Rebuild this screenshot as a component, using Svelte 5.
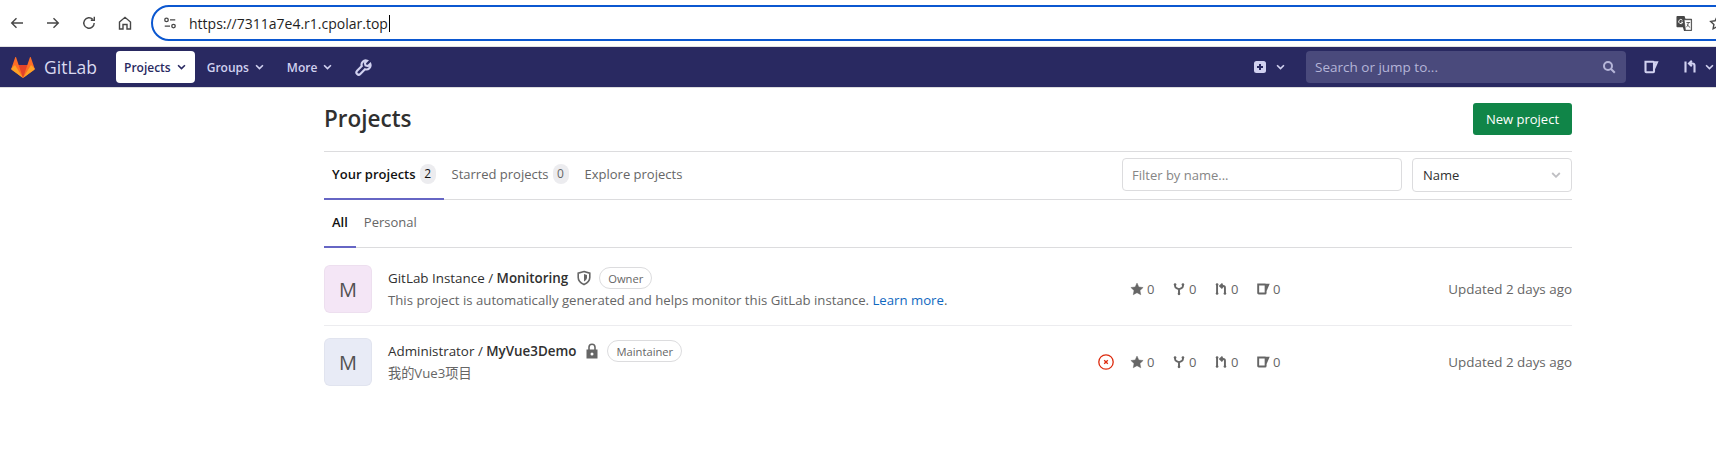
<script lang="ts">
  const stats = [
    { icon: 'star', n: 0 },
    { icon: 'fork', n: 0 },
    { icon: 'mr', n: 0 },
    { icon: 'issue', n: 0 },
  ];

  const paths: Record<string, string> = {
    star: 'M8 1.200l2.100 4.500 4.900.6-3.600 3.400.9 4.900L8 12.200l-4.300 2.400.9-4.900L1 6.300l4.900-.6z',
    fork: 'M3.500 2.500v2c0 1.500 1 2.300 2.200 2.800L8 8.300l2.300-1c1.200-.5 2.200-1.300 2.200-2.800v-2M8 8.300v5.200',
    mr: 'M3.500 2.500v11M12.500 13.500V6.500c0-1.300-.7-2-2-2H7.500M9.800 1.800L7 4.500l2.800 2.700',
    issue: 'M2.500 2.800h7.800c.4 0 .7.3.7.7v9c0 .4-.3.7-.7.7H3.200c-.4 0-.7-.3-.7-.7zM11 3.200h3l-3 6.800',
  };

  const projects = [
    {
      ns: 'GitLab Instance',
      name: 'Monitoring',
      role: 'Owner',
      tint: 'pink',
      vis: 'shield',
      desc: 'This project is automatically generated and helps monitor this GitLab instance.',
      link: 'Learn more',
      failed: false,
    },
    {
      ns: 'Administrator',
      name: 'MyVue3Demo',
      role: 'Maintainer',
      tint: 'blue',
      vis: 'lock',
      desc: '我的Vue3项目',
      link: '',
      failed: true,
    },
  ];
</script>

<div class="browser">
  <div class="tools">
    <svg class="tool" viewBox="0 0 16 16"><path d="M14 8H3M7.500 3.200L2.700 8l4.800 4.800" /></svg>
    <svg class="tool" viewBox="0 0 16 16"><path d="M2 8h11M8.500 3.200L13.300 8l-4.800 4.800" /></svg>
    <svg class="tool" viewBox="0 0 16 16"><path d="M13.200 8a5.200 5.200 0 1 1-1.500-3.700M13.300 1.800v3.500H9.800" /></svg>
    <svg class="tool" viewBox="0 0 16 16"><path d="M2.500 7L8 2.300 13.500 7v7H10V9.500H6V14H2.500z" /></svg>
  </div>
  <div class="omnibox">
    <svg class="tune" viewBox="0 0 16 16">
      <circle cx="4" cy="4.500" r="2" /><path d="M8 4.500h6M2 11.500h6" /><circle cx="12" cy="11.500" r="2" />
    </svg>
    <span class="url">https://7311a7e4.r1.cpolar.top</span><span class="caret"></span>
    <svg class="translate" viewBox="0 0 18 18">
      <path class="t-back" d="M1.500 1h7.500l1 3h6c.5 0 1 .4 1 1v11c0 .5-.5 1-1 1H8.500l-1.200-4H1.500c-.5 0-1-.4-1-1V2c0-.5.500-1 1-1z" />
      <path class="t-front" d="M8.500 5H16.200v11.200H10z" />
      <path class="t-mark" d="M11 8h4M13 8c0 2-1 4-2.200 5M12 10c.500 1.300 1.500 2.500 3 3.200" />
      <path class="t-g" d="M6.800 5.600a2.200 2.200 0 1 0 .4 2H5.200" />
    </svg>
    <svg class="bookmark" viewBox="0 0 16 16"><path d="M8 1.800l1.900 4 4.400.6-3.200 3 .8 4.400L8 11.700l-3.900 2.100.8-4.400-3.200-3 4.400-.6z" /></svg>
  </div>
</div>

<nav class="topbar">
  <div class="brand">
    <svg class="logo" viewBox="0 0 26 24">
      <path fill="#fc6d26" d="M13 23.500L.8 14.500c-.4-.3-.6-.8-.4-1.300L4.600 1c.1-.4.7-.4.900 0L8.300 9.200h9.400L20.500 1c.2-.4.800-.4.900 0l4.200 12.200c.2.500 0 1-.4 1.300z" />
      <path fill="#e24329" d="M13 23.500L8.300 9.200h9.400z" />
      <path fill="#fca326" d="M.4 13.200c-.2.500 0 1 .4 1.300L13 23.500 4.300 9.200z" />
      <path fill="#fca326" d="M25.600 13.200c.2.500 0 1-.4 1.300L13 23.500l8.700-14.300z" />
    </svg>
    <span class="wordmark">GitLab</span>
  </div>
  <a class="nav-item active" href="#p">Projects <svg class="chev" viewBox="0 0 10 6"><path d="M1.200 1L5 4.800 8.800 1" /></svg></a>
  <a class="nav-item" href="#g">Groups <svg class="chev" viewBox="0 0 10 6"><path d="M1.200 1L5 4.800 8.800 1" /></svg></a>
  <a class="nav-item" href="#m">More <svg class="chev" viewBox="0 0 10 6"><path d="M1.200 1L5 4.800 8.800 1" /></svg></a>
  <svg class="wrench" viewBox="0 0 16 16"><path d="M14.400 4.600l-2.200 2.100-2.300-.6-.6-2.300 2.100-2.200a3.900 3.900 0 0 0-5 5L2 11.100a2.100 2.100 0 0 0 3 3l4.400-4.500a3.900 3.900 0 0 0 5-5z" /></svg>

  <div class="nav-right">
    <div class="plus">
      <svg class="plus-icon" viewBox="0 0 12 12"><rect width="12" height="12" rx="2.500" /><path d="M6 3v6M3 6h6" /></svg>
      <svg class="chev light" viewBox="0 0 10 6"><path d="M1.200 1L5 4.800 8.800 1" /></svg>
    </div>
    <div class="search">
      <span>Search or jump to...</span>
      <svg viewBox="0 0 14 14"><circle cx="6" cy="6" r="4" /><path d="M9 9l3.800 3.800" /></svg>
    </div>
    <svg class="nav-icon" viewBox="0 0 16 16"><path d={paths.issue} /></svg>
    <div class="nav-mr">
      <svg class="nav-icon" viewBox="0 0 16 16"><path d={paths.mr} /></svg>
      <svg class="chev light" viewBox="0 0 10 6"><path d="M1.200 1L5 4.800 8.800 1" /></svg>
    </div>
  </div>
</nav>

<main>
  <header class="title-row">
    <h1>Projects</h1>
    <button class="new">New project</button>
  </header>

  <div class="tabs-row">
    <ul class="tabs">
      <li class="on">Your projects <span class="count">2</span></li>
      <li>Starred projects <span class="count muted">0</span></li>
      <li>Explore projects</li>
    </ul>
    <div class="filters">
      <div class="filter">Filter by name...</div>
      <div class="sort">
        <span>Name</span>
        <svg viewBox="0 0 10 6"><path d="M1.200 1L5 4.800 8.800 1" /></svg>
      </div>
    </div>
  </div>

  <ul class="tabs sub">
    <li class="on">All</li>
    <li>Personal</li>
  </ul>

  <div class="list">
    {#each projects as p (p.name)}
      <section class="project">
        <div class="avatar {p.tint}">M</div>
        <div class="info">
          <div class="name-line">
            <span class="path">{p.ns} / <b>{p.name}</b></span>
            {#if p.vis === 'shield'}
              <svg class="vis" viewBox="0 0 16 16"><path class="outline" d="M8 1.500l5.800 1.700v4.300c0 3.200-2.500 5.500-5.800 7-3.300-1.500-5.800-3.800-5.800-7V3.200z" /><path class="fill" d="M8 4l3 1v2.700c0 1.500-1.300 2.800-3 3.800z" /></svg>
            {:else}
              <svg class="vis" viewBox="0 0 16 16"><path class="outline" d="M5 7V4.300a3 3 0 0 1 6 0V7" /><path class="fill" fill-rule="evenodd" d="M2.500 6.500h11V15.500h-11zM8 9.500a1.500 1.500 0 1 0 0 3 1.500 1.500 0 0 0 0-3z" /></svg>
            {/if}
            <span class="role">{p.role}</span>
          </div>
          <p class="desc">{p.desc}{#if p.link}{' '}<a href="#l">{p.link}</a>.{/if}</p>
        </div>
        <div class="stats">
          {#if p.failed}
            <svg class="failed" viewBox="0 0 16 16"><circle cx="8" cy="8" r="7.200" /><path d="M6.200 6.200l3.600 3.600M9.800 6.200l-3.600 3.600" /></svg>
          {/if}
          {#each stats as s (s.icon)}
            <span class="stat">
              <svg class={s.icon} viewBox="0 0 16 16">
                <path d={paths[s.icon]} />
                {#if s.icon === 'fork'}
                  <circle cx="3.500" cy="2.800" r="1.500" /><circle cx="12.500" cy="2.800" r="1.500" /><circle cx="8" cy="13.500" r="1.500" />
                {:else if s.icon === 'mr'}
                  <circle cx="3.500" cy="2.800" r="1.500" /><circle cx="3.500" cy="13.200" r="1.500" /><circle cx="12.500" cy="13.200" r="1.500" />
                {/if}
              </svg>{s.n}
            </span>
          {/each}
        </div>
        <div class="updated">Updated 2 days ago</div>
      </section>
    {/each}
  </div>
</main>

<style>
  :global(body) {
    background: #fff;
    font-family: "Open Sans", "Noto Sans CJK SC", sans-serif;
    overflow: hidden;
  }

  svg {
    display: block;
    flex-shrink: 0;
  }

  .browser {
    height: 46px;
    display: flex;
    align-items: center;
    border-bottom: 1px solid #e3e3e3;
  }

  .tools {
    display: flex;
    gap: 20px;
    padding: 0 0 0 9px;
    width: 151px;
    box-sizing: border-box;
  }

  .tool {
    width: 16px;
    height: 16px;
    fill: none;
    stroke: #474747;
    stroke-width: 1.400;
  }

  .omnibox {
    flex: 1;
    height: 36px;
    margin-right: -40px;
    border: 2px solid #0b57d0;
    border-radius: 19px;
    box-sizing: border-box;
    display: flex;
    align-items: center;
    padding-left: 10px;
  }

  .tune {
    width: 14px;
    height: 14px;
    fill: none;
    stroke: #474747;
    stroke-width: 1.500;
    margin-right: 12px;
  }

  .url {
    font-size: 14px;
    color: #1f1f1f;
  }

  .caret {
    width: 1px;
    height: 17px;
    background: #000;
    margin-left: 1px;
  }

  .translate {
    width: 17px;
    height: 17px;
    margin-left: auto;
    margin-right: 16px;
  }

  .t-back { fill: #474747; }
  .t-front { fill: #fff; stroke: #474747; stroke-width: 0.800; }
  .t-mark { fill: none; stroke: #474747; stroke-width: 0.900; }
  .t-g { fill: none; stroke: #fff; stroke-width: 1; }

  .bookmark {
    width: 16px;
    height: 16px;
    margin-right: 29px;
    fill: none;
    stroke: #474747;
    stroke-width: 1.400;
  }

  .topbar {
    height: 40px;
    background: #292961;
    display: flex;
    align-items: center;
    padding-left: 11px;
    border-bottom: 1px solid #dcdcde;
  }

  .brand {
    display: flex;
    align-items: center;
    gap: 9px;
    width: 105px;
  }

  .logo {
    width: 24px;
    height: 23px;
  }

  .wordmark {
    color: #dadaf0;
    font-size: 17.500px;
  }

  .nav-item {
    display: flex;
    align-items: center;
    gap: 6px;
    height: 32px;
    box-sizing: border-box;
    padding: 0 8px;
    margin-right: 7px;
    border-radius: 4px;
    font-size: 12px;
    font-weight: 600;
    color: #d1d1f0;
    text-decoration: none;
  }

  .nav-item.active {
    background: #fff;
    color: #292961;
    padding-right: 9px;
    margin-right: 4px;
  }

  .chev {
    width: 9px;
    height: 6px;
    fill: none;
    stroke: currentColor;
    stroke-width: 1.800;
  }

  .chev.light {
    color: #d1d1f0;
  }

  .wrench {
    width: 17px;
    height: 17px;
    margin-left: 8px;
    fill: none;
    stroke: #d1d1f0;
    stroke-width: 2;
  }

  .nav-right {
    margin-left: auto;
    display: flex;
    align-items: center;
  }

  .plus {
    display: flex;
    align-items: center;
    gap: 10px;
    margin-right: 21px;
  }

  .plus-icon {
    width: 12px;
    height: 12px;
  }

  .plus-icon rect { fill: #d1d1f0; }
  .plus-icon path { stroke: #292961; stroke-width: 2; }

  .search {
    width: 320px;
    height: 32px;
    background: #4a4a7c;
    border-radius: 4px;
    display: flex;
    align-items: center;
    justify-content: space-between;
    padding: 0 10px 0 9px;
    box-sizing: border-box;
    color: #b5b5d8;
    font-size: 13.500px;
    margin-right: 17px;
  }

  .search svg {
    width: 14px;
    height: 14px;
    fill: none;
    stroke: #b5b5d8;
    stroke-width: 2;
  }

  .nav-icon {
    width: 16px;
    height: 16px;
    fill: none;
    stroke: #d1d1f0;
    stroke-width: 2.100;
  }

  .nav-mr {
    display: flex;
    align-items: center;
    gap: 7px;
    margin-left: 23px;
    margin-right: 2px;
  }

  main {
    width: 1248px;
    margin-left: 324px;
  }

  .title-row {
    height: 64px;
    display: flex;
    align-items: center;
    justify-content: space-between;
    border-bottom: 1px solid #dcdcde;
    box-sizing: border-box;
  }

  h1 {
    margin: 0;
    padding-bottom: 2px;
    font-size: 22.500px;
    font-weight: 600;
    color: #303030;
  }

  .new {
    width: 99px;
    height: 32px;
    margin-top: -1px;
    border: 0;
    border-radius: 3px;
    background: #108548;
    color: #fff;
    font: 13px "Open Sans", sans-serif;
    padding: 0;
  }

  .tabs-row {
    display: flex;
    justify-content: space-between;
    border-bottom: 1px solid #dcdcde;
    height: 48px;
    box-sizing: border-box;
  }

  .tabs {
    display: flex;
    list-style: none;
    margin: 0;
    padding: 0;
  }

  .tabs li {
    display: flex;
    align-items: center;
    gap: 4px;
    padding: 0 8px 5px;
    font-size: 13px;
    color: #666;
    height: 48px;
    box-sizing: border-box;
  }

  .tabs li.on {
    color: #111;
    font-weight: 600;
    box-shadow: inset 0 -2px 0 #6666c4;
  }

  .count {
    min-width: 16px;
    height: 20px;
    border-radius: 10px;
    background: #ececef;
    font-size: 12px;
    font-weight: 400;
    display: flex;
    align-items: center;
    justify-content: center;
    color: #111;
  }

  .count.muted {
    color: #666;
  }

  .filters {
    display: flex;
    gap: 10px;
    padding-top: 6px;
  }

  .filter, .sort {
    border: 1px solid #dcdcde;
    border-radius: 4px;
    box-sizing: border-box;
    font-size: 13px;
    display: flex;
    align-items: center;
  }

  .filter {
    width: 280px;
    height: 33px;
    padding-left: 9px;
    color: #868686;
  }

  .sort {
    width: 160px;
    height: 34px;
    padding: 0 10px;
    color: #303030;
    justify-content: space-between;
  }

  .sort svg {
    width: 10px;
    height: 6px;
    fill: none;
    stroke: #bfbfc3;
    stroke-width: 1.800;
  }

  .sub {
    height: 48px;
    box-sizing: border-box;
    border-bottom: 1px solid #dcdcde;
  }

  .list {
    padding-top: 5px;
  }

  .project {
    display: flex;
    align-items: center;
    height: 72px;
    border-bottom: 1px solid #ececef;
  }

  .project:last-child {
    border-bottom: 0;
  }

  .avatar {
    width: 48px;
    height: 48px;
    border-radius: 6px;
    margin-right: 16px;
    font-size: 20px;
    color: #525252;
    display: flex;
    align-items: center;
    justify-content: center;
    box-shadow: inset 0 0 0 1px rgba(31, 30, 36, 0.03);
  }

  .pink { background: #f4e6f6; }
  .blue { background: #e8ebf6; }

  .info {
    flex: 1;
  }

  .name-line {
    display: flex;
    align-items: center;
    height: 22px;
    font-size: 13.400px;
    color: #303030;
  }

  .path b {
    font-weight: 600;
  }

  .vis {
    width: 16px;
    height: 16px;
    margin-left: 8px;
  }

  .vis .outline {
    fill: none;
    stroke: #666;
    stroke-width: 1.600;
  }

  .vis .fill {
    fill: #666;
  }

  .role {
    margin-left: 7px;
    height: 22px;
    padding: 0 8px;
    border: 1px solid #dcdcde;
    border-radius: 11px;
    box-sizing: border-box;
    display: flex;
    align-items: center;
    font-size: 11.200px;
    color: #666;
  }

  .desc {
    margin: 0;
    line-height: 22px;
    font-size: 13.200px;
    color: #666;
  }

  .desc a {
    color: #1068bf;
    text-decoration: none;
  }

  .stats {
    display: flex;
    align-items: center;
    gap: 17px;
    font-size: 13px;
    color: #666;
    position: relative;
    margin-right: 161px;
  }

  .stat {
    display: flex;
    align-items: center;
    gap: 3px;
    width: 25px;
  }

  .stat svg {
    width: 14px;
    height: 14px;
    fill: none;
    stroke: #666;
    stroke-width: 2.200;
  }

  .stat .star {
    fill: #666;
    stroke-width: 0.500;
  }

  .stat circle {
    fill: #666;
    stroke: none;
  }

  .failed {
    position: absolute;
    left: -32px;
    width: 16px;
    height: 16px;
    fill: none;
    stroke: #dd2b0e;
    stroke-width: 1.300;
  }

  .updated {
    width: 130px;
    text-align: right;
    font-size: 13.400px;
    color: #666;
  }
</style>
